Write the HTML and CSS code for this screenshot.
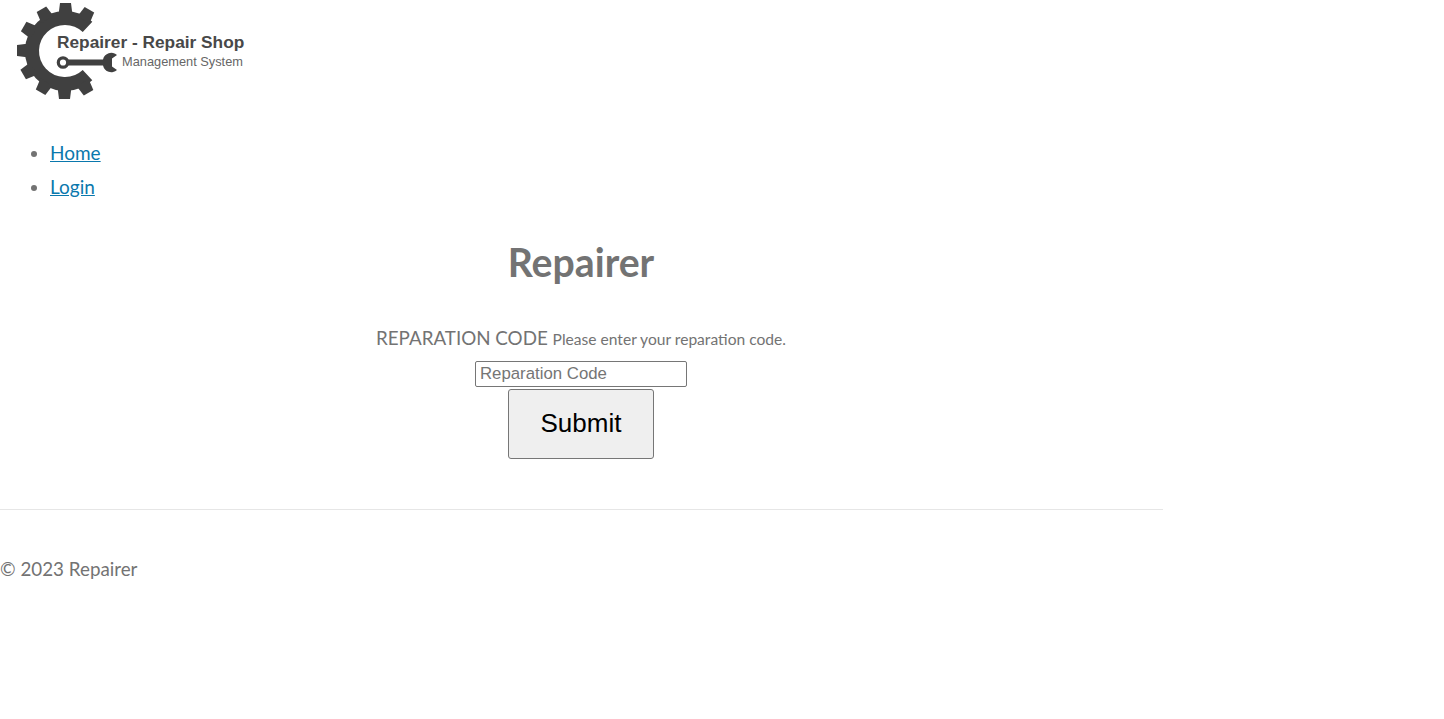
FILE: index.html
```html
<!DOCTYPE html>
<html lang="en">
<head>
    <meta charset="UTF-8">
    <meta name="viewport" content="width=device-width, initial-scale=1.0">
    <title>Repairer</title>
    <link rel="stylesheet" href="styles.css">
</head>
<body>
    <div class="page">
        <!-- Logo -->
        <header class="site-header">
            <a class="logo" href="#">
                <svg class="logo-mark" width="120" height="100" viewBox="0 0 120 100">
                    <circle class="gear-ring" cx="65" cy="51" r="33" pathLength="360" stroke-dasharray="266 94" transform="rotate(47 65 51)"/>
                    <g class="gear-teeth">
                        <polygon points="58.5,15 60,3 71,3 72.5,15"/>
                        <polygon points="58.5,15 60,3 71,3 72.5,15" transform="rotate(30 65 51)"/>
                        <polygon points="58.5,15 60,3 71,3 72.5,15" transform="rotate(-30 65 51)"/>
                        <polygon points="58.5,15 60,3 71,3 72.5,15" transform="rotate(-60 65 51)"/>
                        <polygon points="58.5,15 60,3 71,3 72.5,15" transform="rotate(-90 65 51)"/>
                        <polygon points="58.5,15 60,3 71,3 72.5,15" transform="rotate(-120 65 51)"/>
                        <polygon points="58.5,15 60,3 71,3 72.5,15" transform="rotate(-150 65 51)"/>
                        <polygon points="58.5,15 60,3 71,3 72.5,15" transform="rotate(180 65 51)"/>
                        <polygon points="58.5,15 60,3 71,3 72.5,15" transform="rotate(150 65 51)"/>
                    </g>
                    <circle class="wrench-eye" cx="63" cy="62.5" r="4.7"/>
                    <path class="wrench" d="M67 59.5h36a8.5 8.5 0 0 1 14-4.5l-5 3.5v8l5 3.5a8.5 8.5 0 0 1-14-4.5H67z"/>
                </svg>
                <span class="logo-title">Repairer - Repair Shop</span>
                <span class="logo-sub">Management System</span>
            </a>
        </header>

        <!-- Nav -->
        <ul class="site-nav">
            <li><a href="#">Home</a></li>
            <li><a href="#">Login</a></li>
        </ul>

        <!-- Code form -->
        <main class="code-box">
            <h1>Repairer</h1>
            <form class="code-form">
                <label for="code">REPARATION CODE <small>Please enter your reparation code.</small></label>
                <input id="code" type="text" placeholder="Reparation Code">
                <button type="button">Submit</button>
            </form>
        </main>

        <hr>

        <footer class="site-footer">© 2023 Repairer</footer>
    </div>
</body>
</html>
```

FILE: styles.css
```css
* {
    box-sizing: border-box;
}

body {
    margin: 0;
    font-family: Lato, sans-serif;
    font-size: 19px;
    color: #737373;
    background: #fff;
}

.page {
    width: 1163px;
}

.site-header {
    height: 136px;
}

.logo {
    position: relative;
    display: block;
    width: 260px;
    height: 100px;
}

.logo-mark {
    display: block;
}

.gear-ring {
    fill: none;
    stroke: #404040;
    stroke-width: 14;
}

.gear-teeth {
    fill: #404040;
}

.wrench-eye {
    fill: #fff;
    stroke: #404040;
    stroke-width: 3.2;
}

.wrench {
    fill: #404040;
}

.logo-title {
    position: absolute;
    left: 57px;
    top: 32px;
    font-family: "Liberation Sans", sans-serif;
    font-size: 17.3px;
    font-weight: bold;
    color: #484848;
    white-space: nowrap;
}

.logo-sub {
    position: absolute;
    left: 122px;
    top: 54px;
    font-family: "Liberation Sans", sans-serif;
    font-size: 12.8px;
    color: #666;
    white-space: nowrap;
}

.site-nav {
    margin: 0;
    padding: 0 0 0 50px;
    line-height: 34px;
}

.site-nav a {
    color: #0a78ad;
}

.code-box {
    padding-right: 1px;
    text-align: center;
}

.code-box h1 {
    margin: 33px 0 0;
    font-size: 39.2px;
    line-height: 50px;
    font-weight: bold;
}

.code-form {
    display: flex;
    flex-direction: column;
    align-items: center;
    margin-top: 36px;
}

.code-form label {
    font-size: 18.8px;
    line-height: 30px;
    margin-bottom: 7px;
}

.code-form small {
    font-size: 15.6px;
}

.code-form input {
    width: 212px;
    height: 26px;
    padding: 0 4px;
    border: 1px solid #767676;
    border-radius: 2px;
    font-family: "Liberation Sans", sans-serif;
    font-size: 16.8px;
}

.code-form input::placeholder {
    color: #757575;
}

.code-form button {
    width: 146px;
    height: 70px;
    margin-top: 2px;
    padding-bottom: 3px;
    border: 1px solid #767676;
    border-radius: 3px;
    background: #efefef;
    color: #000;
    font-family: "Liberation Sans", sans-serif;
    font-size: 26px;
}

hr {
    margin: 50px 0 0;
    border: 0;
    border-top: 1px solid #e6e6e6;
}

.site-footer {
    margin-top: 44px;
    font-size: 18.8px;
    line-height: 30px;
}
```
